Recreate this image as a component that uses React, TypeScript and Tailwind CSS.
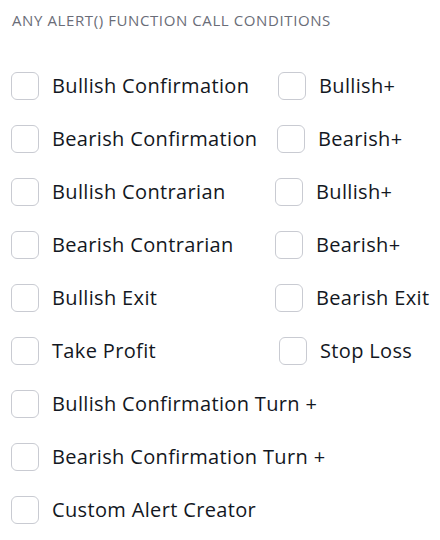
import { useState } from "react";

type Opt = { label: string };
type Row = { left: Opt; right?: Opt; leftWidth?: string };

const rows: Row[] = [
  { left: { label: "Bullish Confirmation" }, right: { label: "Bullish+" }, leftWidth: "w-[267px]" },
  { left: { label: "Bearish Confirmation" }, right: { label: "Bearish+" }, leftWidth: "w-[266px]" },
  { left: { label: "Bullish Contrarian" }, right: { label: "Bullish+" }, leftWidth: "w-[264px]" },
  { left: { label: "Bearish Contrarian" }, right: { label: "Bearish+" }, leftWidth: "w-[264px]" },
  { left: { label: "Bullish Exit" }, right: { label: "Bearish Exit" }, leftWidth: "w-[264px]" },
  { left: { label: "Take Profit" }, right: { label: "Stop Loss" }, leftWidth: "w-[268px]" },
  { left: { label: "Bullish Confirmation Turn +" } },
  { left: { label: "Bearish Confirmation Turn +" } },
  { left: { label: "Custom Alert Creator" } },
];

function Check({ label, id }: { label: string; id: string }) {
  const [checked, setChecked] = useState(false);
  return (
    <label htmlFor={ id } className="flex items-center gap-[13px] cursor-pointer">
      <input
        id={ id }
        type="checkbox"
        checked={ checked }
        onChange={ () => setChecked(!checked) }
        className="peer sr-only"
      />
      <span className="w-[28px] h-[28px] shrink-0 rounded-[6px] border border-[#c9cbd2] bg-white peer-checked:bg-[#2962ff] peer-checked:border-[#2962ff]" />
      <span className="text-[20px] leading-[28px] tracking-[0.35px] text-[#131722] whitespace-nowrap">{ label }</span>
    </label>
  );
}

export default function App() {
  return (
    <main
      className="w-[440px] h-[540px] bg-white pl-[11px] pt-[10px]"
      style={ { fontFamily: '"Open Sans", "DejaVu Sans", sans-serif' } }
    >
      <h3 className="pl-[1px] text-[15px] leading-[20px] text-[#6a6d78] uppercase tracking-[0.6px]">
        Any alert() function call conditions
      </h3>
      <div className="flex flex-col gap-[25px] mt-[42px]">
        { rows.map((row, i) => (
          <div key={ i } className="flex items-center">
            <div className={ row.leftWidth }>
              <Check id={ `l${i}` } label={ row.left.label } />
            </div>
            { row.right && <Check id={ `r${i}` } label={ row.right.label } /> }
          </div>
        )) }
      </div>
    </main>
  );
}
